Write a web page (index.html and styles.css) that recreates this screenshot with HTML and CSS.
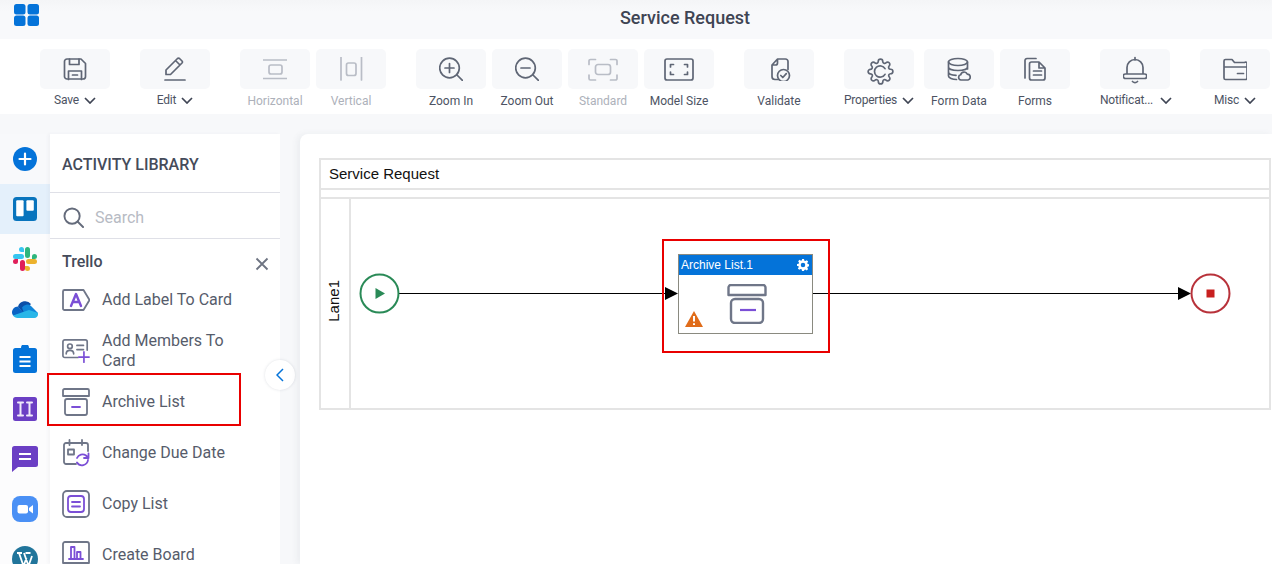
FILE: index.html
```html
<!DOCTYPE html>
<html lang="en">
<head>
<meta charset="utf-8">
<title>Service Request</title>
<link rel="stylesheet" href="styles.css">
</head>
<body>
<header class="topbar">
  <svg class="logo" viewBox="0 0 25 22"><rect x="0" y="0" width="11.5" height="10.5" rx="2.5"/><rect x="13.5" y="0" width="11.5" height="10.5" rx="2.5"/><rect x="0" y="11.5" width="11.5" height="10.5" rx="2.5"/><rect x="13.5" y="11.5" width="11.5" height="10.5" rx="2.5"/></svg>
  <h1 class="title">Service Request</h1>
</header>

<nav class="toolbar">
  <div class="tool">
    <div class="tool-btn"><svg class="ico" viewBox="0 0 24 24"><path d="M1.5 4.5a2.5 2.5 0 0 1 2.5-2.5h14l4.500 4.500v13a2.500 2.500 0 0 1-2.500 2.500H4a2.500 2.500 0 0 1-2.500-2.500z"/><path d="M6.500 2v5.500h9.500V2M5.500 22.500v-8.500h13v8.500M9.500 18h5"/></svg></div>
    <div class="tool-label has-menu">Save<svg class="chev" viewBox="0 0 12 7"><path d="M1 1l5 5 5-5"/></svg></div>
  </div>
  <div class="tool">
    <div class="tool-btn"><svg class="ico" viewBox="0 0 24 24"><path d="M3 17.500v-4.500L14.500 1.500a1.500 1.500 0 0 1 2 0l2.500 2.500a1.500 1.500 0 0 1 0 2L7.500 17.500zM12.500 3.500l4.500 4.500M2 23h20"/></svg></div>
    <div class="tool-label has-menu">Edit<svg class="chev" viewBox="0 0 12 7"><path d="M1 1l5 5 5-5"/></svg></div>
  </div>
  <div class="tool off">
    <div class="tool-btn"><svg class="ico" viewBox="0 0 24 24"><path d="M0 3h24M0 21.500h24"/><rect x="6" y="8" width="13" height="9" rx="2"/></svg></div>
    <div class="tool-label">Horizontal</div>
  </div>
  <div class="tool off near">
    <div class="tool-btn"><svg class="ico" viewBox="0 0 24 24"><path d="M2 0v23M22.500 0v23"/><rect x="7.500" y="6" width="9.500" height="12.500" rx="2"/></svg></div>
    <div class="tool-label">Vertical</div>
  </div>
  <div class="tool">
    <div class="tool-btn"><svg class="ico" viewBox="0 0 24 24"><circle cx="10.500" cy="11" r="9.800"/><path d="M18 18l6 6M10.500 6.500v9M6 11h9"/></svg></div>
    <div class="tool-label">Zoom In</div>
  </div>
  <div class="tool near">
    <div class="tool-btn"><svg class="ico" viewBox="0 0 24 24"><circle cx="10.500" cy="11" r="9.800"/><path d="M18 18l6 6M6 11h9"/></svg></div>
    <div class="tool-label">Zoom Out</div>
  </div>
  <div class="tool off near">
    <div class="tool-btn"><svg class="ico wide" viewBox="0 0 28 24"><path d="M0 7.500V4a1.500 1.500 0 0 1 1.500-1.500h5M21.500 2.500h5A1.500 1.500 0 0 1 28 4v3.500M28 18v3.500A1.500 1.500 0 0 1 26.500 23h-5M6.500 23h-5A1.500 1.500 0 0 1 0 21.500V18"/><rect x="6.500" y="7.500" width="15" height="10" rx="2.500"/></svg></div>
    <div class="tool-label">Standard</div>
  </div>
  <div class="tool near">
    <div class="tool-btn"><svg class="ico wide" viewBox="0 0 30 24"><rect x="1" y="2" width="28" height="21" rx="2"/><path d="M6.500 10V7.500h3M20.500 7.500h3V10M23.500 15v2.500h-3M9.500 17.500h-3V15"/></svg></div>
    <div class="tool-label dark">Model Size</div>
  </div>
  <div class="tool">
    <div class="tool-btn"><svg class="ico" viewBox="0 0 24 24"><path d="M5 19.500V8l5.500-6h8a2.500 2.500 0 0 1 2.500 2.500v8M5 19.500a3 3 0 0 0 3 3h3.500M10.500 2v4a2 2 0 0 1-2 2H5"/><circle cx="16.500" cy="18.500" r="6"/><path d="M13.800 18.500l2 2 3.500-3.800"/></svg></div>
    <div class="tool-label dark">Validate</div>
  </div>
  <div class="tool">
    <div class="tool-btn"><svg class="ico gear" viewBox="0 0 24 24"><path d="M19.400 15a1.650 1.650 0 0 0 .33 1.820l.06.06a2 2 0 0 1 0 2.830 2 2 0 0 1-2.830 0l-.06-.06a1.650 1.650 0 0 0-1.820-.33 1.650 1.650 0 0 0-1 1.510V21a2 2 0 0 1-2 2 2 2 0 0 1-2-2v-.09A1.650 1.650 0 0 0 9 19.400a1.650 1.650 0 0 0-1.820.33l-.06.06a2 2 0 0 1-2.830 0 2 2 0 0 1 0-2.830l.06-.06a1.650 1.650 0 0 0 .33-1.820 1.650 1.650 0 0 0-1.510-1H3a2 2 0 0 1-2-2 2 2 0 0 1 2-2h.09A1.650 1.650 0 0 0 4.600 9a1.650 1.650 0 0 0-.33-1.820l-.06-.06a2 2 0 0 1 0-2.830 2 2 0 0 1 2.830 0l.06.06a1.650 1.650 0 0 0 1.820.33H9a1.650 1.650 0 0 0 1-1.510V3a2 2 0 0 1 2-2 2 2 0 0 1 2 2v.09a1.650 1.650 0 0 0 1 1.510 1.650 1.650 0 0 0 1.820-.33l.06-.06a2 2 0 0 1 2.830 0 2 2 0 0 1 0 2.830l-.06.06a1.650 1.650 0 0 0-.33 1.820V9a1.650 1.650 0 0 0 1.510 1H21a2 2 0 0 1 2 2 2 2 0 0 1-2 2h-.09a1.650 1.650 0 0 0-1.510 1z"/><path d="M16 9.500A5 5 0 1 0 16 14.500"/></svg></div>
    <div class="tool-label has-menu">Properties<svg class="chev" viewBox="0 0 12 7"><path d="M1 1l5 5 5-5"/></svg></div>
  </div>
  <div class="tool close">
    <div class="tool-btn"><svg class="ico" viewBox="0 0 24 24"><ellipse cx="11" cy="5" rx="9.500" ry="3.500"/><path d="M1.500 5v14c0 2 4 3.500 8 3.500M20.500 5v7M1.500 10c0 2 4 3.500 9.500 3.500s9.500-1.500 9.500-3.500M1.500 15c0 2 3.500 3.200 7.500 3.400"/><path d="M14 23a2.700 2.700 0 0 1-.3-5.300 3.500 3.500 0 0 1 6.600-.6 3 3 0 0 1 .7 5.900z"/></svg></div>
    <div class="tool-label dark">Form Data</div>
  </div>
  <div class="tool near">
    <div class="tool-btn"><svg class="ico" viewBox="0 0 24 24"><path d="M2 21V3.500A2 2 0 0 1 4 1.500h9"/><path d="M6.500 7a2 2 0 0 1 2-2h7.500l6 6v10a2 2 0 0 1-2 2h-11.500a2 2 0 0 1-2-2zM16 5v6h6M10.500 14h8M10.500 18h8"/></svg></div>
    <div class="tool-label dark">Forms</div>
  </div>
  <div class="tool">
    <div class="tool-btn"><svg class="ico tall" viewBox="0 0 24 28"><path d="M12 1.500v2.500M4 18v-6.500a8 8 0 0 1 16 0V18M2.500 18h19a2 2 0 0 1 0 4.500h-19a2 2 0 0 1 0-4.500zM9.500 25.500c1.500 1.500 3.500 1.500 5 0"/></svg></div>
    <div class="tool-label has-menu wide-gap">Notificat...<svg class="chev" viewBox="0 0 12 7"><path d="M1 1l5 5 5-5"/></svg></div>
  </div>
  <div class="tool">
    <div class="tool-btn"><svg class="ico" viewBox="0 0 24 24"><path d="M1 10V4a1.500 1.500 0 0 1 1.500-1.500h6.500l2.500 3h10A1.500 1.500 0 0 1 24 7v3M1 10h23v11a1.500 1.500 0 0 1-1.500 1.500h-20A1.500 1.500 0 0 1 1 21zM14.500 16.500h6"/></svg></div>
    <div class="tool-label has-menu">Misc<svg class="chev" viewBox="0 0 12 7"><path d="M1 1l5 5 5-5"/></svg></div>
  </div>
</nav>

<main class="workspace">
  <aside class="rail">
    <div class="rail-item"><svg class="rail-ico small" viewBox="0 0 24 24"><circle cx="12" cy="12" r="12" fill="#0473d9"/><path d="M12 6.500v11M6.500 12h11" stroke="#fff" stroke-width="2.200" stroke-linecap="round"/></svg></div>
    <div class="rail-item active"><svg class="rail-ico small" viewBox="0 0 24 24"><rect width="24" height="24" rx="3.500" fill="#0874bd"/><rect x="3.200" y="3.200" width="7.400" height="16" rx="1" fill="#fff"/><rect x="13.400" y="3.200" width="7.400" height="10.500" rx="1" fill="#fff"/></svg></div>
    <div class="rail-item"><svg class="rail-ico" viewBox="0 0 26 26"><path d="M9.500 1a2.500 2.500 0 0 0 0 5H12V3.500A2.500 2.500 0 0 0 9.500 1zM3.500 8a2.500 2.500 0 0 0 0 5h6a2.500 2.500 0 0 0 0-5z" fill="#36c5f0"/><path d="M25 10.500a2.500 2.500 0 0 0-5 0V13h2.500a2.500 2.500 0 0 0 2.500-2.500zM18 3.500a2.500 2.500 0 0 0-5 0v6a2.500 2.500 0 0 0 5 0z" fill="#2eb67d"/><path d="M15.500 25a2.500 2.500 0 0 0 0-5H13v2.500a2.500 2.500 0 0 0 2.500 2.500zM22.500 18a2.500 2.500 0 0 0 0-5h-6a2.500 2.500 0 0 0 0 5z" fill="#ecb22e"/><path d="M1 15.500a2.500 2.500 0 0 0 5 0V13H3.500A2.500 2.500 0 0 0 1 15.500zM8 22.500a2.500 2.500 0 0 0 5 0v-6a2.500 2.500 0 0 0-5 0z" fill="#e01e5a"/></svg></div>
    <div class="rail-item"><svg class="rail-ico" viewBox="0 0 26 18"><path d="M6 6.500a7.500 7.500 0 0 1 13-2.500l-8 9z" fill="#0b4fa8"/><path d="M6 6.500c-3.500 0-6 2.800-6 5.800 0 1.300.5 2.500 1.300 3.500L12 13z" fill="#0a63c4"/><path d="M10 7.500a6 6 0 0 1 9-1.500l7 7-13 3z" fill="#0f85d9"/><path d="M1 15.500C2 17 3.500 18 5.500 18H22a4 4 0 0 0 4-5l-9-3z" fill="#29b6e8"/></svg></div>
    <div class="rail-item"><svg class="rail-ico clip" viewBox="0 0 24 28"><path d="M2.500 3h5.500a4 4 0 0 1 8 0h5.500A2.500 2.500 0 0 1 24 5.500v20a2.500 2.500 0 0 1-2.500 2.500h-19A2.500 2.500 0 0 1 0 25.500v-20A2.500 2.500 0 0 1 2.500 3z" fill="#0473d9"/><path d="M6.500 12h11M6.500 16.500h11M6.500 21h11" stroke="#fff" stroke-width="2"/></svg></div>
    <div class="rail-item"><svg class="rail-ico small" viewBox="0 0 24 24"><rect width="24" height="24" rx="2.500" fill="#6b3fc4"/><path d="M5 5.500h5M7.500 5.500v13M5 18.500h5M14 5.500h5M16.500 5.500v13M14 18.500h5" stroke="#efe9fa" stroke-width="2" fill="none" stroke-linecap="round"/></svg></div>
    <div class="rail-item"><svg class="rail-ico" viewBox="0 0 26 26"><path d="M2.500 0h21A2.500 2.500 0 0 1 26 2.500v16a2.500 2.500 0 0 1-2.500 2.500H6L0 26V2.500A2.500 2.500 0 0 1 2.500 0z" fill="#6b3fc4"/><path d="M7 8h12M7 13h12" stroke="#fff" stroke-width="2"/></svg></div>
    <div class="rail-item"><svg class="rail-ico" viewBox="0 0 26 26"><rect width="26" height="26" rx="8" fill="#4a90f5"/><rect x="5.500" y="9" width="10.500" height="8.500" rx="2" fill="#fff"/><path d="M17 12l4-3v8.500l-4-3z" fill="#fff"/></svg></div>
    <div class="rail-item"><svg class="rail-ico" viewBox="0 0 26 26"><circle cx="13" cy="13" r="13" fill="#21759b"/><path d="M5 7h5M13.500 7h5M7 7l4.500 13 3-8M12 7l4.500 13 3.500-10" stroke="#fff" stroke-width="1.800" fill="none"/></svg></div>
  </aside>

  <section class="library">
    <h2 class="lib-head">ACTIVITY LIBRARY</h2>
    <div class="lib-search">
      <svg class="search-ico" viewBox="0 0 22 22"><circle cx="9.500" cy="9.500" r="8"/><path d="M15.500 15.500l5.500 5.500"/></svg>
      <span class="search-text">Search</span>
    </div>
    <div class="lib-group">
      <span class="group-name">Trello</span>
      <svg class="close-ico" viewBox="0 0 14 14"><path d="M1.500 1.500l11 11M12.500 1.500l-11 11"/></svg>
    </div>
    <ul class="lib-list">
      <li class="lib-item"><svg class="item-ico" viewBox="0 0 28 24"><path class="g" d="M2.500 2h19l6 10-6 10h-19A1.500 1.500 0 0 1 1 20.500v-17A1.500 1.500 0 0 1 2.500 2z"/><path class="p bold" d="M9 18l5-12 5 12M11 14h6"/></svg><span>Add Label To Card</span></li>
      <li class="lib-item"><svg class="item-ico" viewBox="0 0 30 26"><path class="g" d="M17 20H3a2 2 0 0 1-2-2V3a2 2 0 0 1 2-2h22a2 2 0 0 1 2 2v9"/><circle class="g" cx="8.500" cy="8" r="2.500"/><path class="g" d="M4.500 16c0-5 8-5 8 0M16 7h7M16 11.500h7"/><path class="p" d="M23.500 14v11M18 19.500h11"/></svg><span>Add Members To Card</span></li>
      <li class="lib-item"><svg class="item-ico" viewBox="0 0 28 28"><path class="g" d="M1 8V2.500A1.500 1.500 0 0 1 2.500 1h23A1.500 1.500 0 0 1 27 2.500V8z"/><rect class="g" x="3" y="11" width="22" height="16" rx="2"/><path class="p" d="M10 19h8"/></svg><span>Archive List</span></li>
      <li class="lib-item"><svg class="item-ico" viewBox="0 0 28 26"><path class="g" d="M14 24H4a2 2 0 0 1-2-2V5a2 2 0 0 1 2-2h20a2 2 0 0 1 2 2v6M7.500 0v5M20 0v5"/><rect class="g" x="6" y="9.500" width="6" height="5"/><path class="p" d="M26 20a6 6 0 0 1-11 2.500M15 18a6 6 0 0 1 9-2.500l2 2M26.500 13.500v4.500h-4.500"/></svg><span>Change Due Date</span></li>
      <li class="lib-item"><svg class="item-ico" viewBox="0 0 28 28"><rect class="g" x="1" y="1" width="26" height="26" rx="4"/><rect class="p" x="6" y="6" width="16" height="16" rx="3"/><path class="p" d="M10 12h8M10 16.500h8"/></svg><span>Copy List</span></li>
      <li class="lib-item"><svg class="item-ico" viewBox="0 0 28 28"><path class="g" d="M1 22V3a2 2 0 0 1 2-2h22a2 2 0 0 1 2 2v19zM9 22l-3 5M19 22l3 5"/><path class="p" d="M7 18h14M9 18V6h3.500v12M15 18v-7h3.500v7"/></svg><span>Create Board</span></li>
    </ul>
    <div class="lib-mark"></div>
  </section>

  <button class="collapse" type="button" aria-label="Collapse"><svg viewBox="0 0 8 14"><path d="M7 1L1 7l6 6"/></svg></button>

  <section class="canvas">
    <div class="pool">
      <div class="pool-title">Service Request</div>
      <div class="pool-strip"></div>
      <div class="lane">
        <div class="lane-label"><span>Lane1</span></div>
        <div class="lane-body"></div>
      </div>
    </div>

    <svg class="flows" viewBox="0 0 972 430">
      <path class="flow" d="M99 159.500H366"/>
      <path class="head" d="M365 153l13 6.500-13 6.500z"/>
      <path class="flow" d="M513 159.500H879"/>
      <path class="head" d="M878 153l13 6.500-13 6.500z"/>
      <circle class="start" cx="79.500" cy="159.500" r="19"/>
      <path class="start-mark" d="M75.500 154l9.500 5.500-9.500 5.500z"/>
      <circle class="end" cx="910.500" cy="159.500" r="19"/>
      <rect class="end-mark" x="906.500" y="155.500" width="8" height="8"/>
    </svg>

    <div class="mark-box"></div>
    <div class="node">
      <div class="node-head">
        <span>Archive List.1</span>
        <svg class="node-gear" viewBox="0 0 24 24"><path d="M10 0h4l.7 3.300 2 .8L19.500 2.300l2.800 2.800-1.800 2.800.8 2 3.300.7v4l-3.300.7-.8 2 1.800 2.800-2.800 2.800-2.800-1.800-2 .8L14 24h-4l-.7-3.300-2-.8-2.800 1.800-2.800-2.800 1.800-2.800-.8-2L0 14v-4l3.300-.7.8-2-1.800-2.800 2.800-2.800 2.800 1.800 2-.8zM12 7.500a4.500 4.500 0 1 0 0 9 4.500 4.500 0 0 0 0-9z" fill-rule="evenodd"/></svg>
      </div>
      <div class="node-body">
        <svg class="node-ico" viewBox="0 0 40 40"><path class="ng" d="M1.500 11V3.500A2.500 2.500 0 0 1 4 1h32a2.500 2.500 0 0 1 2.500 2.500V11z"/><rect class="ng" x="4" y="15" width="32" height="24" rx="4"/><path class="np" d="M13 26h16"/></svg>
        <svg class="node-warn" viewBox="0 0 18 16"><path d="M9 0l9 16H0z" fill="#e06c1a"/><path d="M9 5v5.500M9 12.300v1.700" stroke="#fff" stroke-width="2"/></svg>
      </div>
    </div>
  </section>
</main>
</body>
</html>
```

FILE: styles.css
```css
* { box-sizing: border-box; }

html, body {
  margin: 0;
  width: 1272px;
  height: 564px;
  overflow: hidden;
}

body {
  display: flex;
  flex-direction: column;
  background: #f7f8fa;
  font-family: Roboto, "Liberation Sans", sans-serif;
  color: #454b5a;
}

/* top bar */
.topbar {
  height: 39px;
  flex: none;
  display: flex;
  align-items: flex-start;
  background: linear-gradient(#f4f5f7, #f8f9fb 30%);
}

.logo {
  width: 25px;
  height: 22px;
  margin: 4px 0 0 14px;
  flex: none;
  fill: #0473d9;
}

.title {
  flex: 1;
  margin: 0;
  padding: 7px 0 0 59px;
  font-size: 18px;
  line-height: 22px;
  font-weight: 500;
  text-align: center;
  color: #3f4554;
}

/* toolbar */
.toolbar {
  height: 75px;
  flex: none;
  display: flex;
  gap: 30px;
  padding: 10px 0 0 40px;
  background: #fff;
}

.tool {
  width: 70px;
  flex: none;
  display: flex;
  flex-direction: column;
  align-items: center;
}

.tool.near { margin-left: -24px; }
.tool.close { margin-left: -20px; }

.tool-btn {
  width: 70px;
  height: 40px;
  display: flex;
  align-items: center;
  justify-content: center;
  background: #f7f8fa;
  border-radius: 5px;
}

.ico {
  width: 24px;
  height: 24px;
  fill: none;
  stroke: #5f6675;
  stroke-width: 1.7;
  stroke-linecap: round;
  stroke-linejoin: round;
}

.ico.wide { width: 30px; }
.ico.tall { height: 28px; margin-top: 2px; }
.ico.gear { width: 27px; height: 27px; margin: 4px 0 0 3px; stroke-width: 1.500; }

.tool.off .ico { stroke: #b9bdc6; }

.tool-label {
  font-size: 12px;
  line-height: 14px;
  white-space: nowrap;
  color: #4d5363;
  margin-top: 4px;
  padding-top: 1px;
}

.tool.off .tool-label { color: #adb1ba; }

.tool-label.has-menu {
  display: flex;
  align-items: center;
  gap: 5px;
  padding-top: 0;
  letter-spacing: -0.2px;
}

.tool-label.wide-gap { gap: 7px; padding-left: 2px; }

.chev {
  width: 12px;
  height: 7px;
  fill: none;
  stroke: #3f4554;
  stroke-width: 1.700;
}

/* workspace */
.workspace {
  flex: 1;
  display: flex;
  padding-top: 20px;
  position: relative;
  min-height: 0;
}

.rail {
  width: 50px;
  flex: none;
  display: flex;
  flex-direction: column;
  background: #fcfcfd;
}

.rail-item {
  height: 50px;
  flex: none;
  display: flex;
  align-items: center;
  justify-content: center;
}

.rail-item:first-child { background: #f8f9fb; }
.rail-item.active { background: #e4f0fb; }

.rail-ico {
  width: 26px;
  height: 26px;
}

.rail-ico.small {
  width: 24px;
  height: 24px;
}

.rail-ico.clip {
  width: 24px;
  height: 28px;
}

.library {
  width: 230px;
  flex: none;
  position: relative;
  background: #fff;
  box-shadow: -2px 0 3px rgba(90, 100, 120, 0.05);
}

.lib-head {
  height: 59px;
  margin: 0;
  padding: 0 0 0 12px;
  border-bottom: 1px solid #dfe0e7;
  font-size: 16px;
  line-height: 61px;
  font-weight: 500;
  color: #454b5a;
}

.lib-search {
  height: 46px;
  display: flex;
  align-items: center;
  gap: 11px;
  padding: 3px 0 0 13px;
  border-bottom: 1px solid #dfe0e7;
}

.search-ico {
  width: 21px;
  height: 21px;
  fill: none;
  stroke: #646b7b;
  stroke-width: 2;
  stroke-linecap: round;
}

.search-text {
  font-size: 16px;
  color: #b7bbc4;
}

.lib-group {
  height: 35px;
  display: flex;
  align-items: center;
  justify-content: space-between;
  padding: 10px 11px 0 12px;
}

.group-name {
  font-size: 16px;
  font-weight: 500;
  color: #454b5a;
}

.close-ico {
  width: 14px;
  height: 14px;
  margin-top: 4px;
  fill: none;
  stroke: #6e7482;
  stroke-width: 1.800;
}

.lib-list {
  margin: 0;
  padding: 0;
  list-style: none;
}

.lib-item {
  height: 51px;
  display: flex;
  align-items: center;
  gap: 12px;
  padding-left: 12px;
  font-size: 16px;
  line-height: 20px;
  color: #565c6b;
}

.lib-item span { width: 140px; }

.item-ico {
  width: 28px;
  height: 28px;
  flex: none;
  fill: none;
  stroke-width: 1.800;
  stroke-linecap: round;
  stroke-linejoin: round;
}

.item-ico .g { stroke: #6f7688; }
.item-ico .p { stroke: #7b4fd6; }
.item-ico .bold { stroke-width: 2.400; }

.lib-mark {
  position: absolute;
  left: -3px;
  top: 239px;
  width: 194px;
  height: 53px;
  border: 2px solid #e90000;
}

.collapse {
  position: absolute;
  left: 265px;
  top: 246px;
  width: 30px;
  height: 30px;
  padding: 0;
  display: flex;
  align-items: center;
  justify-content: center;
  border: 0;
  border-radius: 50%;
  background: #fff;
  box-shadow: 0 0 3px rgba(90, 100, 120, 0.2);
}

.collapse svg {
  width: 8px;
  height: 14px;
  fill: none;
  stroke: #0473d9;
  stroke-width: 1.500;
}

/* canvas */
.canvas {
  flex: 1;
  margin-left: 20px;
  position: relative;
  padding: 24px 1px 0 19px;
  background: #fff;
  border-top-left-radius: 8px;
  box-shadow: -3px 0 6px rgba(90, 100, 120, 0.07);
  font-family: "Liberation Sans", Arial, sans-serif;
}

.pool {
  height: 252px;
  display: flex;
  flex-direction: column;
  border: 2px solid #e4e4e4;
  color: #111;
}

.pool-title {
  height: 28px;
  flex: none;
  padding-left: 8px;
  font-size: 15px;
  line-height: 28px;
}

.pool-strip {
  height: 11px;
  flex: none;
  border-top: 2px solid #e4e4e4;
  border-bottom: 2px solid #e4e4e4;
}

.lane {
  flex: 1;
  display: flex;
}

.lane-label {
  width: 30px;
  flex: none;
  display: flex;
  align-items: center;
  justify-content: center;
  padding: 0 3px 6px 0;
  border-right: 2px solid #e4e4e4;
  font-size: 15px;
}

.lane-label span {
  writing-mode: vertical-rl;
  transform: rotate(180deg);
}

.lane-body { flex: 1; }

.flows {
  position: absolute;
  left: 0;
  top: 0;
  width: 972px;
  height: 430px;
}

.flow {
  fill: none;
  stroke: #000;
  stroke-width: 1;
}

.head { fill: #000; }

.start {
  fill: #fff;
  stroke: #2a8a57;
  stroke-width: 2;
}

.start-mark { fill: #2a8a57; }

.end {
  fill: #fff;
  stroke: #b8323a;
  stroke-width: 2;
}

.end-mark { fill: #c8201f; }

.mark-box {
  position: absolute;
  left: 362px;
  top: 105px;
  width: 168px;
  height: 114px;
  border: 2px solid #e90000;
}

.node {
  position: absolute;
  left: 378px;
  top: 120px;
  width: 135px;
  height: 80px;
  border: 1px solid #8a8a80;
  background: #fff;
  display: flex;
  flex-direction: column;
}

.node-head {
  height: 20px;
  flex: none;
  display: flex;
  align-items: center;
  justify-content: space-between;
  padding: 0 3px 0 2px;
  background: #0473d9;
  color: #fff;
  font-size: 12px;
}

.node-gear {
  width: 12px;
  height: 12px;
  fill: #fff;
}

.node-body {
  flex: 1;
  position: relative;
  display: flex;
  justify-content: center;
  padding: 9px 0 0 2px;
}

.node-ico {
  width: 40px;
  height: 40px;
  fill: none;
}

.ng {
  stroke: #6f7688;
  stroke-width: 2.400;
  stroke-linejoin: round;
}

.np {
  stroke: #7b4fd6;
  stroke-width: 2.200;
}

.node-warn {
  position: absolute;
  left: 6px;
  bottom: 6px;
  width: 18px;
  height: 16px;
}
```
